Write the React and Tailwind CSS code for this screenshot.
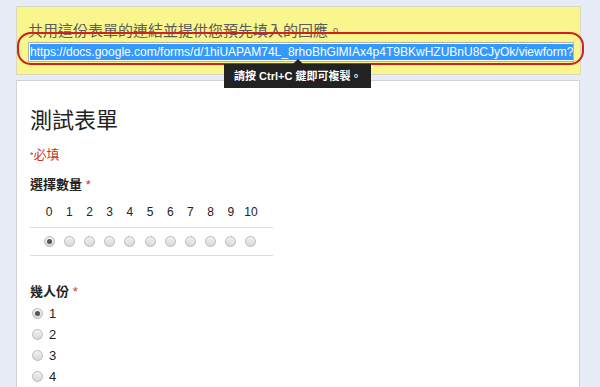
const FONT = "font-['Liberation_Sans','Noto_Sans_CJK_TC',sans-serif]";
const URL = "https://docs.google.com/forms/d/1hiUAPAM74L_8rhoBhGlMIAx4p4T9BKwHZUBnU8CJyOk/viewform?";

function Radio({ checked }) {
    return (
        <span className="flex h-[11px] w-[11px] items-center justify-center rounded-full border border-[#b9b9b9] bg-gradient-to-b from-[#f2f2f2] to-[#d8d8d8]">
            {checked && <span className="h-[5px] w-[5px] rounded-full bg-[#555]" />}
        </span>
    );
}

export default function App() {
    const scale = [0, 1, 2, 3, 4, 5, 6, 7, 8, 9, 10];
    const people = [1, 2, 3, 4];

    return (
        <div className={`h-[387px] w-[600px] overflow-hidden bg-[#e7ecf6] pt-[6px] ${FONT}`}>
            {/* share link box */}
            <div className="relative ml-4 h-[69px] w-[565px] border border-[#d9d9c0] bg-[#faf68e]">
                <p className="pl-[11px] pt-[15px] text-[15px] leading-[18px] text-[#5c5c5c]">
                    共用這份表單的連結並提供您預先填入的回應。
                </p>
                <div className="ml-[11px] mt-[2px] flex h-[20px] w-[546px] items-center overflow-hidden border border-[#b0b0b0] bg-white pl-[1px]">
                    <span className="whitespace-nowrap bg-[#3399ff] text-[12px] leading-[16px] text-white">{URL}</span>
                </div>

                {/* red annotation oval */}
                <div className="pointer-events-none absolute left-[0px] top-[25px] h-[33px] w-[567px] rounded-[14px] border-2 border-[#d21f1f]" />

                {/* tooltip */}
                <div className="absolute left-[207px] top-[52px] z-10 flex flex-col items-center">
                    <div className="h-0 w-0 border-x-[5px] border-b-[5px] border-x-transparent border-b-[#222]" />
                    <div className="whitespace-nowrap bg-[#222] px-[10px] py-[4px] text-[11px] font-bold leading-[16px] text-white">
                        請按 Ctrl+C 鍵即可複製。
                    </div>
                </div>
            </div>

            {/* form card */}
            <div className="ml-4 mt-[5px] h-[320px] w-[564px] border border-[#d2d2d2] bg-white pl-[13px]">
                <h1 className="pt-[25px] text-[22px] leading-[30px] text-[#222]">測試表單</h1>
                <p className="mt-[10px] text-[13px] leading-[18px] text-[#c43b1d]">
                    <span className="align-top text-[9px]">*</span>必填
                </p>

                <p className="mt-[12px] text-[13px] font-bold leading-[18px] text-[#222]">
                    選擇數量 <span className="font-normal text-[#c43b1d]">*</span>
                </p>
                <div className="mt-[10px] w-[243px]">
                    <div className="flex pl-[9px] pb-[7px]">
                        {scale.map((n) => (
                            <span key={n} className="w-[20.2px] text-center text-[12px] leading-[16px] text-[#222]">{n}</span>
                        ))}
                    </div>
                    <div className="flex border-y border-[#ddd] py-[8px] pl-[9px]">
                        {scale.map((n) => (
                            <span key={n} className="flex w-[20.2px] justify-center">
                                <Radio checked={n === 0} />
                            </span>
                        ))}
                    </div>
                </div>

                <p className="mt-[27px] text-[13px] font-bold leading-[18px] text-[#222]">
                    幾人份 <span className="font-normal text-[#c43b1d]">*</span>
                </p>
                <div className="mt-[2px] flex flex-col">
                    {people.map((n) => (
                        <label key={n} className="flex h-[21px] items-center gap-[6px] pl-[2px]">
                            <Radio checked={n === 1} />
                            <span className="text-[13px] leading-[16px] text-[#222]">{n}</span>
                        </label>
                    ))}
                </div>
            </div>
        </div>
    );
}
